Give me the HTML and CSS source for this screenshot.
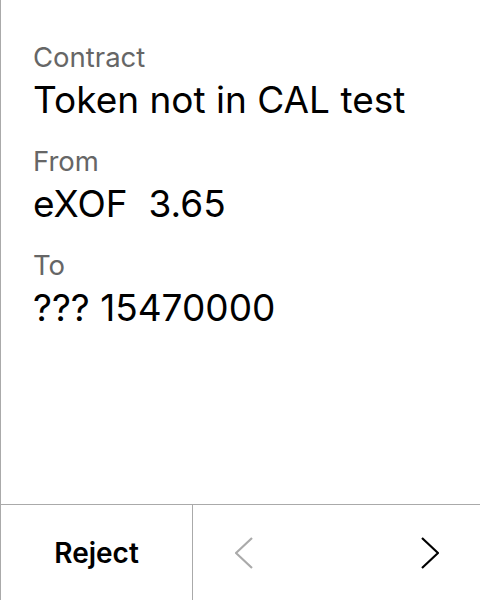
FILE: index.html
```html
<!DOCTYPE html>
<html>
<head>
<meta charset="utf-8">
<link rel="stylesheet" href="styles.css">
</head>
<body>
<div class="screen">
  <div class="content">
    <div class="field">
      <div class="label">Contract</div>
      <div class="value">Token not in CAL test</div>
    </div>
    <div class="field">
      <div class="label">From</div>
      <div class="value">eXOF&nbsp; 3.65</div>
    </div>
    <div class="field">
      <div class="label">To</div>
      <div class="value">??? 15470000</div>
    </div>
  </div>
  <div class="footer">
    <div class="reject">Reject</div>
    <div class="nav">
      <svg class="chev" width="18" height="32" viewBox="0 0 18 32"><polyline points="17,1 1,16 17,31" fill="none" stroke="#aaaaaa" stroke-width="2.2"/></svg>
      <svg class="chev" width="18" height="32" viewBox="0 0 18 32"><polyline points="1,1 17,16 1,31" fill="none" stroke="#000000" stroke-width="2.2"/></svg>
    </div>
  </div>
</div>
</body>
</html>
```

FILE: styles.css
```css
html, body {
  margin: 0;
  padding: 0;
  background: #ffffff;
}
.screen {
  width: 480px;
  height: 600px;
  box-sizing: border-box;
  border-left: 1px solid #aaaaaa;
  display: flex;
  flex-direction: column;
  font-family: Inter, "Liberation Sans", sans-serif;
  color: #000000;
}
.content {
  flex: 1;
  padding: 41px 0 0 32px;
  display: flex;
  flex-direction: column;
  gap: 25px;
}
.field {
  display: flex;
  flex-direction: column;
  gap: 7px;
}
.label {
  font-size: 27.5px;
  line-height: 32px;
  color: #666666;
}
.value {
  font-size: 37px;
  line-height: 40px;
  color: #000000;
}
.footer {
  height: 95px;
  border-top: 1px solid #aaaaaa;
  display: flex;
}
.reject {
  width: 191px;
  border-right: 1px solid #aaaaaa;
  display: flex;
  align-items: center;
  justify-content: center;
  font-size: 28px;
  font-weight: 600;
}
.nav {
  flex: 1;
  display: flex;
  align-items: center;
  justify-content: space-between;
  padding: 0 41px 0 42px;
}
.chev {
  display: block;
}
```
